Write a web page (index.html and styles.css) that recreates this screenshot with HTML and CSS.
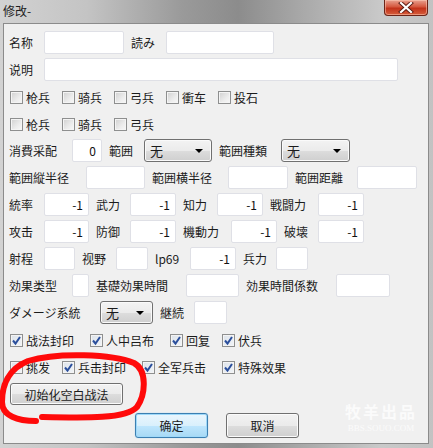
FILE: index.html
```html
<!DOCTYPE html>
<html lang="zh">
  <head>
    <meta charset="UTF-8" />
    <title>修改-</title>
    <link rel="stylesheet" href="styles.css">
  </head>
  <body>
    <div class="window">
      <div class="titlebar">
        <span class="title">修改-</span>
        <button class="close">
          <svg width="16" height="11" viewBox="0 0 16 11">
            <path d="M3 1 L13 10 M13 1 L3 10" stroke="#5a1a12" stroke-width="4" stroke-linecap="square" />
            <path d="M3 1 L13 10 M13 1 L3 10" stroke="#ffffff" stroke-width="2.2" stroke-linecap="square" />
          </svg>
        </button>
      </div>

      <div class="client">
        <div class="row r-name">
          <span class="lbl">名称</span>
          <input class="field" />
          <span class="lbl">読み</span>
          <input class="field" />
        </div>
        <div class="row r-desc">
          <span class="lbl">说明</span>
          <input class="field" />
        </div>

        <div class="checks first">
          <label class="cb"><span class="box"></span>枪兵</label>
          <label class="cb"><span class="box"></span>骑兵</label>
          <label class="cb"><span class="box"></span>弓兵</label>
          <label class="cb"><span class="box"></span>衝车</label>
          <label class="cb"><span class="box"></span>投石</label>
        </div>
        <div class="checks">
          <label class="cb"><span class="box"></span>枪兵</label>
          <label class="cb"><span class="box"></span>骑兵</label>
          <label class="cb"><span class="box"></span>弓兵</label>
        </div>

        <div class="grid-rows">
          <div class="row r-cost">
            <span class="lbl">消費采配</span>
            <input class="field" value="0" />
            <span class="lbl">範囲</span>
            <div class="select">无<span class="arrow"></span></div>
            <span class="lbl">範囲種類</span>
            <div class="select">无<span class="arrow"></span></div>
          </div>
          <div class="row r-radius">
            <span class="lbl">範囲縦半径</span>
            <input class="field" />
            <span class="lbl">範囲横半径</span>
            <input class="field" />
            <span class="lbl">範囲距離</span>
            <input class="field" />
          </div>
          <div class="row r-stat1">
            <span class="lbl">統率</span>
            <input class="field" value="-1" />
            <span class="lbl">武力</span>
            <input class="field" value="-1" />
            <span class="lbl">知力</span>
            <input class="field" value="-1" />
            <span class="lbl">戦闘力</span>
            <input class="field" value="-1" />
          </div>
          <div class="row r-stat2">
            <span class="lbl">攻击</span>
            <input class="field" value="-1" />
            <span class="lbl">防御</span>
            <input class="field" value="-1" />
            <span class="lbl">機動力</span>
            <input class="field" value="-1" />
            <span class="lbl">破壊</span>
            <input class="field" value="-1" />
          </div>
          <div class="row r-range">
            <span class="lbl">射程</span>
            <input class="field" />
            <span class="lbl">视野</span>
            <input class="field" />
            <span class="lbl">lp69</span>
            <input class="field" value="-1" />
            <span class="lbl">兵力</span>
            <input class="field" />
          </div>
          <div class="row r-effect">
            <span class="lbl">効果类型</span>
            <input class="field" />
            <span class="lbl">基礎効果時間</span>
            <input class="field" />
            <span class="lbl">効果時間係数</span>
            <input class="field" />
          </div>
          <div class="row r-damage">
            <span class="lbl">ダメージ系統</span>
            <div class="select">无<span class="arrow"></span></div>
            <span class="lbl">継続</span>
            <input class="field" />
          </div>
        </div>

        <div class="checks checked-row">
          <label class="cb wide"><span class="box on"><svg width="11" height="11" viewBox="0 0 11 11"><path d="M2 5.5 L4.5 8.5 L9 2" fill="none" stroke="#2b4f9c" stroke-width="2" /></svg></span>战法封印</label>
          <label class="cb wide"><span class="box on"><svg width="11" height="11" viewBox="0 0 11 11"><path d="M2 5.5 L4.5 8.5 L9 2" fill="none" stroke="#2b4f9c" stroke-width="2" /></svg></span>人中吕布</label>
          <label class="cb"><span class="box on"><svg width="11" height="11" viewBox="0 0 11 11"><path d="M2 5.5 L4.5 8.5 L9 2" fill="none" stroke="#2b4f9c" stroke-width="2" /></svg></span>回复</label>
          <label class="cb"><span class="box on"><svg width="11" height="11" viewBox="0 0 11 11"><path d="M2 5.5 L4.5 8.5 L9 2" fill="none" stroke="#2b4f9c" stroke-width="2" /></svg></span>伏兵</label>
        </div>
        <div class="checks">
          <label class="cb"><span class="box on"><svg width="11" height="11" viewBox="0 0 11 11"><path d="M2 5.5 L4.5 8.5 L9 2" fill="none" stroke="#2b4f9c" stroke-width="2" /></svg></span>挑发</label>
          <label class="cb wide"><span class="box on"><svg width="11" height="11" viewBox="0 0 11 11"><path d="M2 5.5 L4.5 8.5 L9 2" fill="none" stroke="#2b4f9c" stroke-width="2" /></svg></span>兵击封印</label>
          <label class="cb wide"><span class="box on"><svg width="11" height="11" viewBox="0 0 11 11"><path d="M2 5.5 L4.5 8.5 L9 2" fill="none" stroke="#2b4f9c" stroke-width="2" /></svg></span>全军兵击</label>
          <label class="cb"><span class="box on"><svg width="11" height="11" viewBox="0 0 11 11"><path d="M2 5.5 L4.5 8.5 L9 2" fill="none" stroke="#2b4f9c" stroke-width="2" /></svg></span>特殊效果</label>
        </div>

        <button class="btn btn--reset">初始化空白战法</button>

        <div class="actions">
          <button class="btn btn--default">确定</button>
          <button class="btn">取消</button>
        </div>
      </div>

      <!-- red marker scribble drawn over the screenshot -->
      <svg class="scribble" width="433" height="448" viewBox="0 0 433 448">
        <path d="M36 421 C18 421 2 416 2 402 C2 386 8 369 28 361 C58 352 112 354 134 363 C147 370 146 394 137 407 C126 419 86 418 42 417"
          fill="none" stroke="#ff0a0a" stroke-width="6" stroke-linecap="round" stroke-linejoin="round" />
      </svg>

      <div class="watermark">
        <div class="watermark__big">牧羊出品</div>
        <div class="watermark__small">BBS.SOUO.COM</div>
      </div>
    </div>
  </body>
</html>
```

FILE: styles.css
```css
* {
  box-sizing: border-box;
  margin: 0;
  padding: 0;
}
body {
  width: 433px;
  height: 448px;
  overflow: hidden;
  font-family: "Noto Sans CJK SC", "Microsoft YaHei", sans-serif;
  font-size: 12px;
  color: #1b1b1b;
}
.window {
  position: relative;
  width: 433px;
  height: 448px;
  display: flex;
  flex-direction: column;
  background: linear-gradient(
    to right,
    #d2d2d2 0%,
    #c4c4c4 20%,
    #9a9a9a 42%,
    #8c8c8c 55%,
    #a9a9a9 70%,
    #c9c9c9 88%,
    #c2c2c2 100%
  );
}
.titlebar {
  height: 23px;
  display: flex;
  justify-content: space-between;
  align-items: flex-start;
}
.title {
  padding: 2px 0 0 3px;
  line-height: 17px;
  color: #1d1d1d;
}
.close {
  width: 44px;
  height: 16px;
  margin-right: 5px;
  border: 1px solid #6b2418;
  border-top: none;
  border-radius: 0 0 4px 4px;
  background: linear-gradient(#e8a190 0%, #d5583f 45%, #c2321a 55%, #d65e3c 100%);
  box-shadow: inset 0 0 0 1px rgba(255, 210, 190, 0.5);
  display: flex;
  align-items: center;
  justify-content: center;
}

.client {
  flex: 1;
  margin: 0 4px 4px 3px;
  background-color: #f0f0f0;
  border: 1px solid #8b8b8b;
  padding: 7px 0 0 5px;
}

.row {
  display: grid;
  align-items: center;
  height: 23px;
}
.row .lbl {
  padding-left: 7px;
  white-space: nowrap;
}
.row .lbl:first-child {
  padding-left: 0;
}
.r-desc {
  margin-top: 4px;
}
.r-name {
  grid-template-columns: 35px 80px 42px 108px;
}
.r-desc {
  grid-template-columns: 35px 354px;
}
.r-cost {
  grid-template-columns: 63px 30px 42px 68px 69px 69px;
}
.r-radius {
  grid-template-columns: 77px 59px 83px 60px 69px 60px;
}
.r-stat1 {
  grid-template-columns: 35px 45px 41px 46px 41px 46px 55px 46px;
}
.r-stat2 {
  grid-template-columns: 35px 45px 41px 46px 55px 46px 41px 46px;
}
.r-range {
  grid-template-columns: 35px 31px 41px 32px 42px 46px 40px 32px;
}
.r-effect {
  grid-template-columns: 63px 17px 97px 53px 97px 54px;
}
.r-damage {
  grid-template-columns: 91px 53px 41px 33px;
}

.grid-rows {
  display: flex;
  flex-direction: column;
  gap: 4px;
  margin-top: 6px;
}

.field {
  width: 100%;
  height: 23px;
  border: 1px solid #dfe0e6;
  border-radius: 2px;
  background-color: #fff;
  font: inherit;
  color: #111;
  text-align: right;
  padding-right: 5px;
}
.field:focus {
  outline: none;
}

.select {
  height: 23px;
  border: 1px solid #707070;
  border-radius: 3px;
  background: linear-gradient(#f3f3f3 0%, #ebebeb 50%, #dddddd 51%, #cfcfcf 100%);
  box-shadow: inset 0 0 0 1px #fafafa;
  display: flex;
  align-items: center;
  justify-content: space-between;
  padding: 0 8px 0 5px;
  font-size: 13px;
}
.arrow {
  width: 0;
  height: 0;
  border-left: 4px solid transparent;
  border-right: 4px solid transparent;
  border-top: 4px solid #000;
}

.checks {
  display: flex;
  height: 17px;
  align-items: center;
  margin: 10px 0 0 1px;
}
.checks.first {
  margin-top: 8px;
}
.checks.checked-row {
  margin-top: 8px;
}
.cb {
  width: 52px;
  display: flex;
  align-items: center;
  white-space: nowrap;
}
.cb.wide {
  width: 80px;
}
.box {
  width: 13px;
  height: 13px;
  margin-right: 3px;
  border: 1px solid #8e8f8f;
  background: linear-gradient(135deg, #d0d0d0 0%, #ececec 60%, #f8f8f8 100%);
  box-shadow: inset 0 0 0 1px #f4f4f4;
  display: flex;
  align-items: center;
  justify-content: center;
}
.box.on {
  background: linear-gradient(135deg, #dde3ea 0%, #f1f4f8 100%);
}

.btn {
  height: 23px;
  border: 1px solid #707070;
  border-radius: 3px;
  background: linear-gradient(#f2f2f2 0%, #ebebeb 50%, #dddddd 51%, #cfcfcf 100%);
  box-shadow: inset 0 0 0 1px #fbfbfb;
  font: inherit;
  color: #1b1b1b;
  cursor: pointer;
}
.btn--reset {
  width: 113px;
  height: 22px;
  margin: 7px 0 0 1px;
}
.actions {
  display: flex;
  gap: 18px;
  margin: 8px 0 0 126px;
}
.actions .btn {
  width: 73px;
  height: 25px;
}
.btn--default {
  border-color: #3c7fb1;
  background: linear-gradient(#eaf6fd 0%, #d9f0fc 50%, #bee6fd 51%, #a7d9f5 100%);
  box-shadow: inset 0 0 0 1px #9fd9f9, 0 0 1px #6cc0f0;
}

.scribble {
  position: absolute;
  top: 0;
  left: 0;
  pointer-events: none;
}
.watermark {
  position: absolute;
  left: 345px;
  top: 403px;
  color: #fbfbfb;
  text-align: center;
  pointer-events: none;
}
.watermark__big {
  font-family: "Noto Sans CJK SC", sans-serif;
  font-size: 16px;
  font-weight: bold;
  letter-spacing: 2px;
  line-height: 17px;
}
.watermark__small {
  margin-top: 3px;
  font-family: "Liberation Serif", serif;
  font-size: 9px;
  line-height: 10px;
}
```
